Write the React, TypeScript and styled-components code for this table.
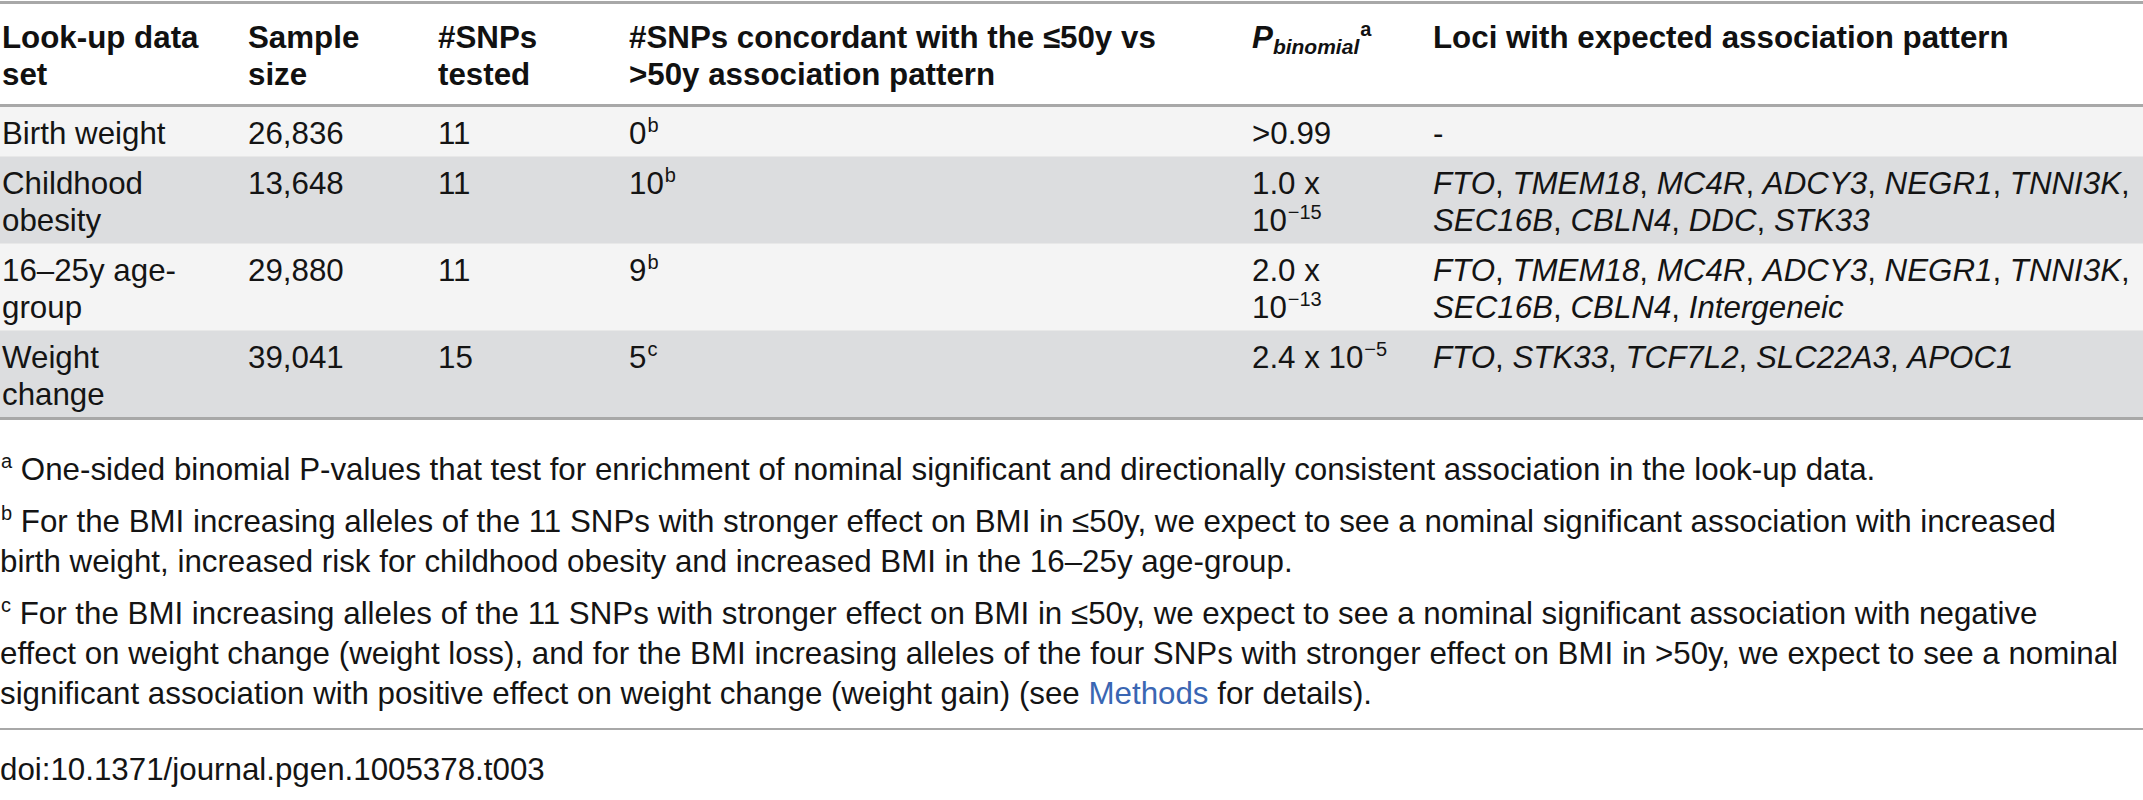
import React from "react";
import styled, { createGlobalStyle } from "styled-components";

const GlobalStyle = createGlobalStyle`
  html, body {
    margin: 0;
    padding: 0;
    background: #ffffff;
  }
  body {
    font-family: "Liberation Sans", Arial, Helvetica, sans-serif;
    color: #141414;
  }
`;

const Page = styled.div`
  width: 2143px;
  padding-top: 1px;
  box-sizing: border-box;
  font-size: 31.3px;
  line-height: 37px;
`;

const Table = styled.table`
  width: 100%;
  border-collapse: collapse;
  table-layout: fixed;
  border-top: 3px solid #a8a8a8;
  border-bottom: 3px solid #a8a8a8;
`;

const Col = styled.col<{ $w?: number }>`
  width: ${(p) => (p.$w ? `${p.$w}px` : "auto")};
`;

const HeadRow = styled.tr`
  border-bottom: 3px solid #a8a8a8;
  background: #ffffff;
`;

const Th = styled.th`
  text-align: left;
  vertical-align: top;
  font-weight: 700;
  padding: 15px 2px 11px 2px;
  white-space: nowrap;
  color: #111;
`;

const BodyRow = styled.tr<{ $shade: "light" | "dark" }>`
  background: ${(p) => (p.$shade === "light" ? "#f4f4f4" : "#dcdddf")};
  & + & {
    border-top: 1px solid #e8e8e8;
  }
`;

const Td = styled.td`
  vertical-align: top;
  padding: 8px 2px 4px 2px;
  white-space: nowrap;
`;

const Sup = styled.sup`
  font-size: 20px;
  line-height: 0;
  vertical-align: 0;
  position: relative;
  top: -12px;
  margin-left: 1px;
`;

const Sub = styled.sub`
  font-size: 21px;
  line-height: 0;
  vertical-align: 0;
  position: relative;
  top: 6px;
  font-style: italic;
`;

const Em = styled.em`
  font-style: italic;
`;

const Notes = styled.div`
  margin-top: 30px;
  line-height: 40px;
`;

const Note = styled.p`
  margin: 0 0 12px 0;
  white-space: nowrap;
`;

const Link = styled.a`
  color: #3a66b3;
  text-decoration: none;
`;

const Rule = styled.hr`
  border: none;
  border-top: 2px solid #a8a8a8;
  margin: 14px 0 0 0;
  height: 0;
`;

const Doi = styled.div`
  margin-top: 20px;
  line-height: 40px;
`;

const Le = () => <span>≤</span>;

type Row = {
  set: React.ReactNode;
  size: string;
  tested: string;
  conc: React.ReactNode;
  p: React.ReactNode;
  loci: React.ReactNode;
  shade: "light" | "dark";
};

const rows: Row[] = [
  {
    set: "Birth weight",
    size: "26,836",
    tested: "11",
    conc: (
      <>
        0<Sup>b</Sup>
      </>
    ),
    p: ">0.99",
    loci: "-",
    shade: "light",
  },
  {
    set: (
      <>
        Childhood
        <br />
        obesity
      </>
    ),
    size: "13,648",
    tested: "11",
    conc: (
      <>
        10<Sup>b</Sup>
      </>
    ),
    p: (
      <>
        1.0 x
        <br />
        10<Sup>−15</Sup>
      </>
    ),
    loci: (
      <>
        <Em>FTO</Em>, <Em>TMEM18</Em>, <Em>MC4R</Em>, <Em>ADCY3</Em>, <Em>NEGR1</Em>, <Em>TNNI3K</Em>,
        <br />
        <Em>SEC16B</Em>, <Em>CBLN4</Em>, <Em>DDC</Em>, <Em>STK33</Em>
      </>
    ),
    shade: "dark",
  },
  {
    set: (
      <>
        16–25y age-
        <br />
        group
      </>
    ),
    size: "29,880",
    tested: "11",
    conc: (
      <>
        9<Sup>b</Sup>
      </>
    ),
    p: (
      <>
        2.0 x
        <br />
        10<Sup>−13</Sup>
      </>
    ),
    loci: (
      <>
        <Em>FTO</Em>, <Em>TMEM18</Em>, <Em>MC4R</Em>, <Em>ADCY3</Em>, <Em>NEGR1</Em>, <Em>TNNI3K</Em>,
        <br />
        <Em>SEC16B</Em>, <Em>CBLN4</Em>, <Em>Intergeneic</Em>
      </>
    ),
    shade: "light",
  },
  {
    set: (
      <>
        Weight
        <br />
        change
      </>
    ),
    size: "39,041",
    tested: "15",
    conc: (
      <>
        5<Sup>c</Sup>
      </>
    ),
    p: (
      <>
        2.4 x 10<Sup>−5</Sup>
      </>
    ),
    loci: (
      <>
        <Em>FTO</Em>, <Em>STK33</Em>, <Em>TCF7L2</Em>, <Em>SLC22A3</Em>, <Em>APOC1</Em>
      </>
    ),
    shade: "dark",
  },
];

export default function App() {
  return (
    <>
      <GlobalStyle />
      <Page>
        <Table>
          <colgroup>
            <Col $w={246} />
            <Col $w={190} />
            <Col $w={191} />
            <Col $w={623} />
            <Col $w={181} />
            <Col />
          </colgroup>
          <thead>
            <HeadRow>
              <Th>
                Look-up data
                <br />
                set
              </Th>
              <Th>
                Sample
                <br />
                size
              </Th>
              <Th>
                #SNPs
                <br />
                tested
              </Th>
              <Th>
                #SNPs concordant with the <Le />
                50y vs
                <br />
                &gt;50y association pattern
              </Th>
              <Th>
                <Em>P</Em>
                <Sub>binomial</Sub>
                <Sup>a</Sup>
              </Th>
              <Th>Loci with expected association pattern</Th>
            </HeadRow>
          </thead>
          <tbody>
            {rows.map((r, i) => (
              <BodyRow key={i} $shade={r.shade}>
                <Td>{r.set}</Td>
                <Td>{r.size}</Td>
                <Td>{r.tested}</Td>
                <Td>{r.conc}</Td>
                <Td>{r.p}</Td>
                <Td>{r.loci}</Td>
              </BodyRow>
            ))}
          </tbody>
        </Table>
        <Notes>
          <Note>
            <Sup>a</Sup> One-sided binomial P-values that test for enrichment of nominal significant and
            directionally consistent association in the look-up data.
          </Note>
          <Note>
            <Sup>b</Sup> For the BMI increasing alleles of the 11 SNPs with stronger effect on BMI in <Le />
            50y, we expect to see a nominal significant association with increased
            <br />
            birth weight, increased risk for childhood obesity and increased BMI in the 16–25y age-group.
          </Note>
          <Note>
            <Sup>c</Sup> For the BMI increasing alleles of the 11 SNPs with stronger effect on BMI in <Le />
            50y, we expect to see a nominal significant association with negative
            <br />
            effect on weight change (weight loss), and for the BMI increasing alleles of the four SNPs with
            stronger effect on BMI in &gt;50y, we expect to see a nominal
            <br />
            significant association with positive effect on weight change (weight gain) (see{" "}
            <Link href="#methods">Methods</Link> for details).
          </Note>
        </Notes>
        <Rule />
        <Doi>doi:10.1371/journal.pgen.1005378.t003</Doi>
      </Page>
    </>
  );
}
